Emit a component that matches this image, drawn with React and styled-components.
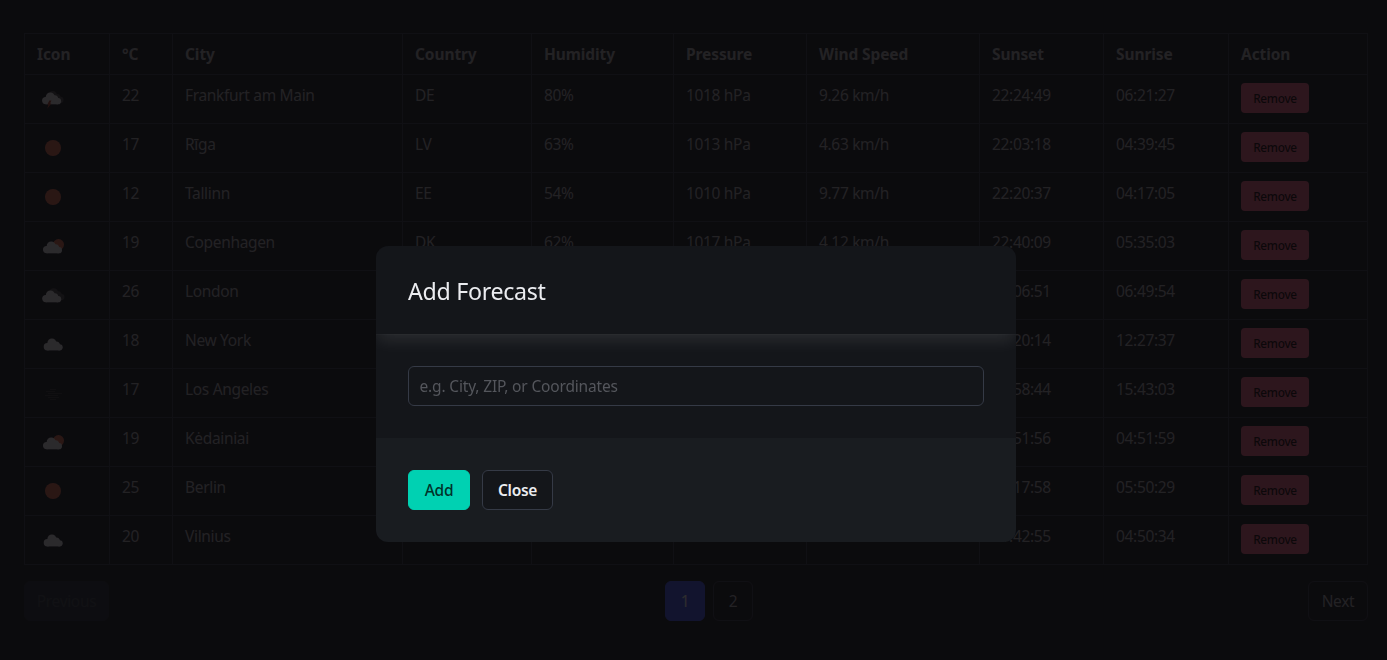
import React from 'react';
import styled, { createGlobalStyle } from 'styled-components';

const Global = createGlobalStyle`
  *, *::before, *::after { box-sizing: border-box; }
  html, body { margin: 0; background: #14151a; }
  body {
    height: 660px;
    overflow: hidden;
    color: #b5b5ba;
    font-family: 'Noto Sans', 'Open Sans', sans-serif;
    font-size: 15.5px;
    line-height: 24px;
    letter-spacing: -0.33px;
  }
`;

const Page = styled.main`
  padding: 33px 19px 0 24px;
`;

const Table = styled.table`
  width: 1344px;
  table-layout: fixed;
  border-collapse: separate;
  border-spacing: 0;
  border: solid #353a46;
  border-width: 1px 0 0 1px;
`;

const cellBorder = 'border: solid #353a46; border-width: 0 1px 1px 0;';

const HeadCell = styled.th`
  ${cellBorder}
  width: ${(p) => p.$width}px;
  height: 41px;
  padding: 8px 12px;
  text-align: left;
  font-weight: 700;
  letter-spacing: -0.1px;
`;

const Cell = styled.td`
  ${cellBorder}
  height: 49px;
  padding: 8px 12px;
  vertical-align: top;
  white-space: nowrap;
`;

const Icon = styled.svg`
  display: block;
  width: 32px;
  height: 32px;
`;

const RemoveButton = styled.button`
  display: block;
  width: 68px;
  height: 30px;
  padding: 0 0 1px;
  border: 0;
  border-radius: 4px;
  background: #ff6685;
  color: #1a0006;
  font: 500 11.8px/24px 'Noto Sans', 'Open Sans', sans-serif;
  letter-spacing: -0.3px;
`;

const Pagination = styled.nav`
  display: flex;
  align-items: center;
  justify-content: space-between;
  width: 1344px;
  margin-top: 16px;
`;

const PageList = styled.div`
  display: flex;
  gap: 8px;
  margin-left: 1px;
`;

const PageButton = styled.button`
  min-width: 40px;
  height: 40px;
  padding: 0;
  border: 1px solid ${(p) => (p.$active ? '#4258ff' : '#353a46')};
  border-radius: 6px;
  background: ${(p) => (p.$active ? '#4258ff' : 'transparent')};
  color: ${(p) => (p.$active ? '#fff' : '#b5b5ba')};
  font: inherit;
  letter-spacing: inherit;
  ${(p) => p.$width && `width: ${p.$width}px;`}
  &:disabled {
    border-color: #1f2831;
    background: #1f2831;
    color: #3c434d;
  }
`;

const Overlay = styled.div`
  position: fixed;
  inset: 0;
  display: flex;
  align-items: center;
  justify-content: center;
  padding: 128px 0 0 5px;
  background: rgba(10, 9, 12, 0.86);
`;

const Card = styled.section`
  width: 640px;
  border-radius: 12px;
  overflow: hidden;
`;

const CardHead = styled.header`
  position: relative;
  padding: 32px;
  background: #14161a;
  box-shadow: 0 8px 16px -2px rgba(255, 255, 255, 0.1), 0 0 0 1px rgba(255, 255, 255, 0.02);
`;

const Title = styled.h2`
  margin: 0;
  color: #ebecf0;
  font-size: 23.2px;
  font-weight: 400;
  line-height: 26px;
  height: 24px;
  letter-spacing: -0.3px;
`;

const CardBody = styled.div`
  padding: 32px;
  background: #14161a;
`;

const Input = styled.input`
  display: block;
  width: 100%;
  height: 40px;
  padding: 0 11px 0 10.5px;
  border: 1px solid #353a46;
  border-radius: 6px;
  background: #14161a;
  color: #ebecf0;
  font: inherit;
  letter-spacing: -0.16px;
  &::placeholder { color: #54565c; opacity: 1; }
`;

const CardFoot = styled.footer`
  display: flex;
  gap: 12px;
  padding: 32px;
  background: #191c20;
`;

const ActionButton = styled.button`
  width: ${(p) => (p.$primary ? 62 : 71)}px;
  height: 40px;
  padding: 0;
  border: 1px solid ${(p) => (p.$primary ? '#00d1b2' : '#353a46')};
  border-radius: 6px;
  background: ${(p) => (p.$primary ? '#00d1b2' : '#14161a')};
  color: ${(p) => (p.$primary ? '#00332b' : '#ebecf0')};
  font: inherit;
  font-weight: ${(p) => (p.$primary ? 500 : 600)};
  letter-spacing: -0.3px;
`;

function Cloud({ x, y, fill }) {
  return (
    <g transform={`translate(${x} ${y})`} fill={fill}>
      <circle cx="3.800" cy="8.300" r="3.700" />
      <circle cx="8.300" cy="4.600" r="4.500" />
      <circle cx="12.700" cy="6.200" r="3.200" />
      <circle cx="16" cy="8.900" r="3.100" />
      <rect x="3.800" y="5" width="12.200" height="7" />
    </g>
  );
}

function WeatherIcon({ kind }) {
  return (
    <Icon viewBox="0 0 32 32">
      {kind === 'sun' && <circle cx="16" cy="16" r="8" fill="#eb6e4b" />}
      {kind === 'cloud' && <Cloud x={6.6} y={10.4} fill="#f2f2f2" />}
      {kind === 'partly' && (
        <>
          <circle cx="21.500" cy="14.600" r="5.500" fill="#eb6e4b" />
          <Cloud x={5.9} y={11.3} fill="#f2f2f2" />
        </>
      )}
      {kind === 'broken' && (
        <>
          <Cloud x={8.4} y={9.2} fill="#484848" />
          <Cloud x={5.1} y={11.3} fill="#f2f2f2" />
        </>
      )}
      {kind === 'storm' && (
        <>
          <Cloud x={7.4} y={8} fill="#484848" />
          <Cloud x={5} y={9.3} fill="#f2f2f2" />
          <path d="M12.300 17.500h2.200l-1.400 2.900h1.300l-4.200 5.400 1.300-4.200h-1.200z" fill="#b8452c" />
        </>
      )}
      {kind === 'mist' && (
        <path
          d="M13 12.500h6M9 14.500h9M11 16.500h14M8 18.500h13M11 20.500h11M13 22.500h6"
          stroke="#484848"
          strokeWidth=".6"
        />
      )}
    </Icon>
  );
}

const COLUMNS = [
  ['Icon', 85], ['°C', 63], ['City', 230], ['Country', 129], ['Humidity', 142],
  ['Pressure', 133], ['Wind Speed', 173], ['Sunset', 124], ['Sunrise', 125], ['Action', 139],
];

const ROWS = [
  ['storm', '22', 'Frankfurt am Main', 'DE', '80%', '1018 hPa', '9.26 km/h', '22:24:49', '06:21:27'],
  ['sun', '17', 'Rīga', 'LV', '63%', '1013 hPa', '4.63 km/h', '22:03:18', '04:39:45'],
  ['sun', '12', 'Tallinn', 'EE', '54%', '1010 hPa', '9.77 km/h', '22:20:37', '04:17:05'],
  ['partly', '19', 'Copenhagen', 'DK', '62%', '1017 hPa', '4.12 km/h', '22:40:09', '05:35:03'],
  ['broken', '26', 'London', '', '', '', '', '23:06:51', '06:49:54'],
  ['cloud', '18', 'New York', '', '', '', '', '03:20:14', '12:27:37'],
  ['mist', '17', 'Los Angeles', '', '', '', '', '05:58:44', '15:43:03'],
  ['partly', '19', 'Kėdainiai', '', '', '', '', '21:51:56', '04:51:59'],
  ['sun', '25', 'Berlin', '', '', '', '', '22:17:58', '05:50:29'],
  ['cloud', '20', 'Vilnius', '', '', '', '4.12 km/h', '21:42:55', '04:50:34'],
];

export default function App() {
  return (
    <>
      <Global />
      <Page>
        <Table>
          <thead>
            <tr>
              {COLUMNS.map(([label, width]) => (
                <HeadCell key={label} $width={width}>{label}</HeadCell>
              ))}
            </tr>
          </thead>
          <tbody>
            {ROWS.map(([kind, ...values]) => (
              <tr key={values[1]}>
                <Cell><WeatherIcon kind={kind} /></Cell>
                {values.map((value, i) => <Cell key={i}>{value}</Cell>)}
                <Cell><RemoveButton>Remove</RemoveButton></Cell>
              </tr>
            ))}
          </tbody>
        </Table>
        <Pagination>
          <PageButton disabled $width={85}>Previous</PageButton>
          <PageList>
            <PageButton $active>1</PageButton>
            <PageButton>2</PageButton>
          </PageList>
          <PageButton $width={60}>Next</PageButton>
        </Pagination>
      </Page>
      <Overlay>
        <Card role="dialog" aria-label="Add Forecast">
          <CardHead><Title>Add Forecast</Title></CardHead>
          <CardBody><Input placeholder="e.g. City, ZIP, or Coordinates" /></CardBody>
          <CardFoot>
            <ActionButton $primary>Add</ActionButton>
            <ActionButton>Close</ActionButton>
          </CardFoot>
        </Card>
      </Overlay>
    </>
  );
}
